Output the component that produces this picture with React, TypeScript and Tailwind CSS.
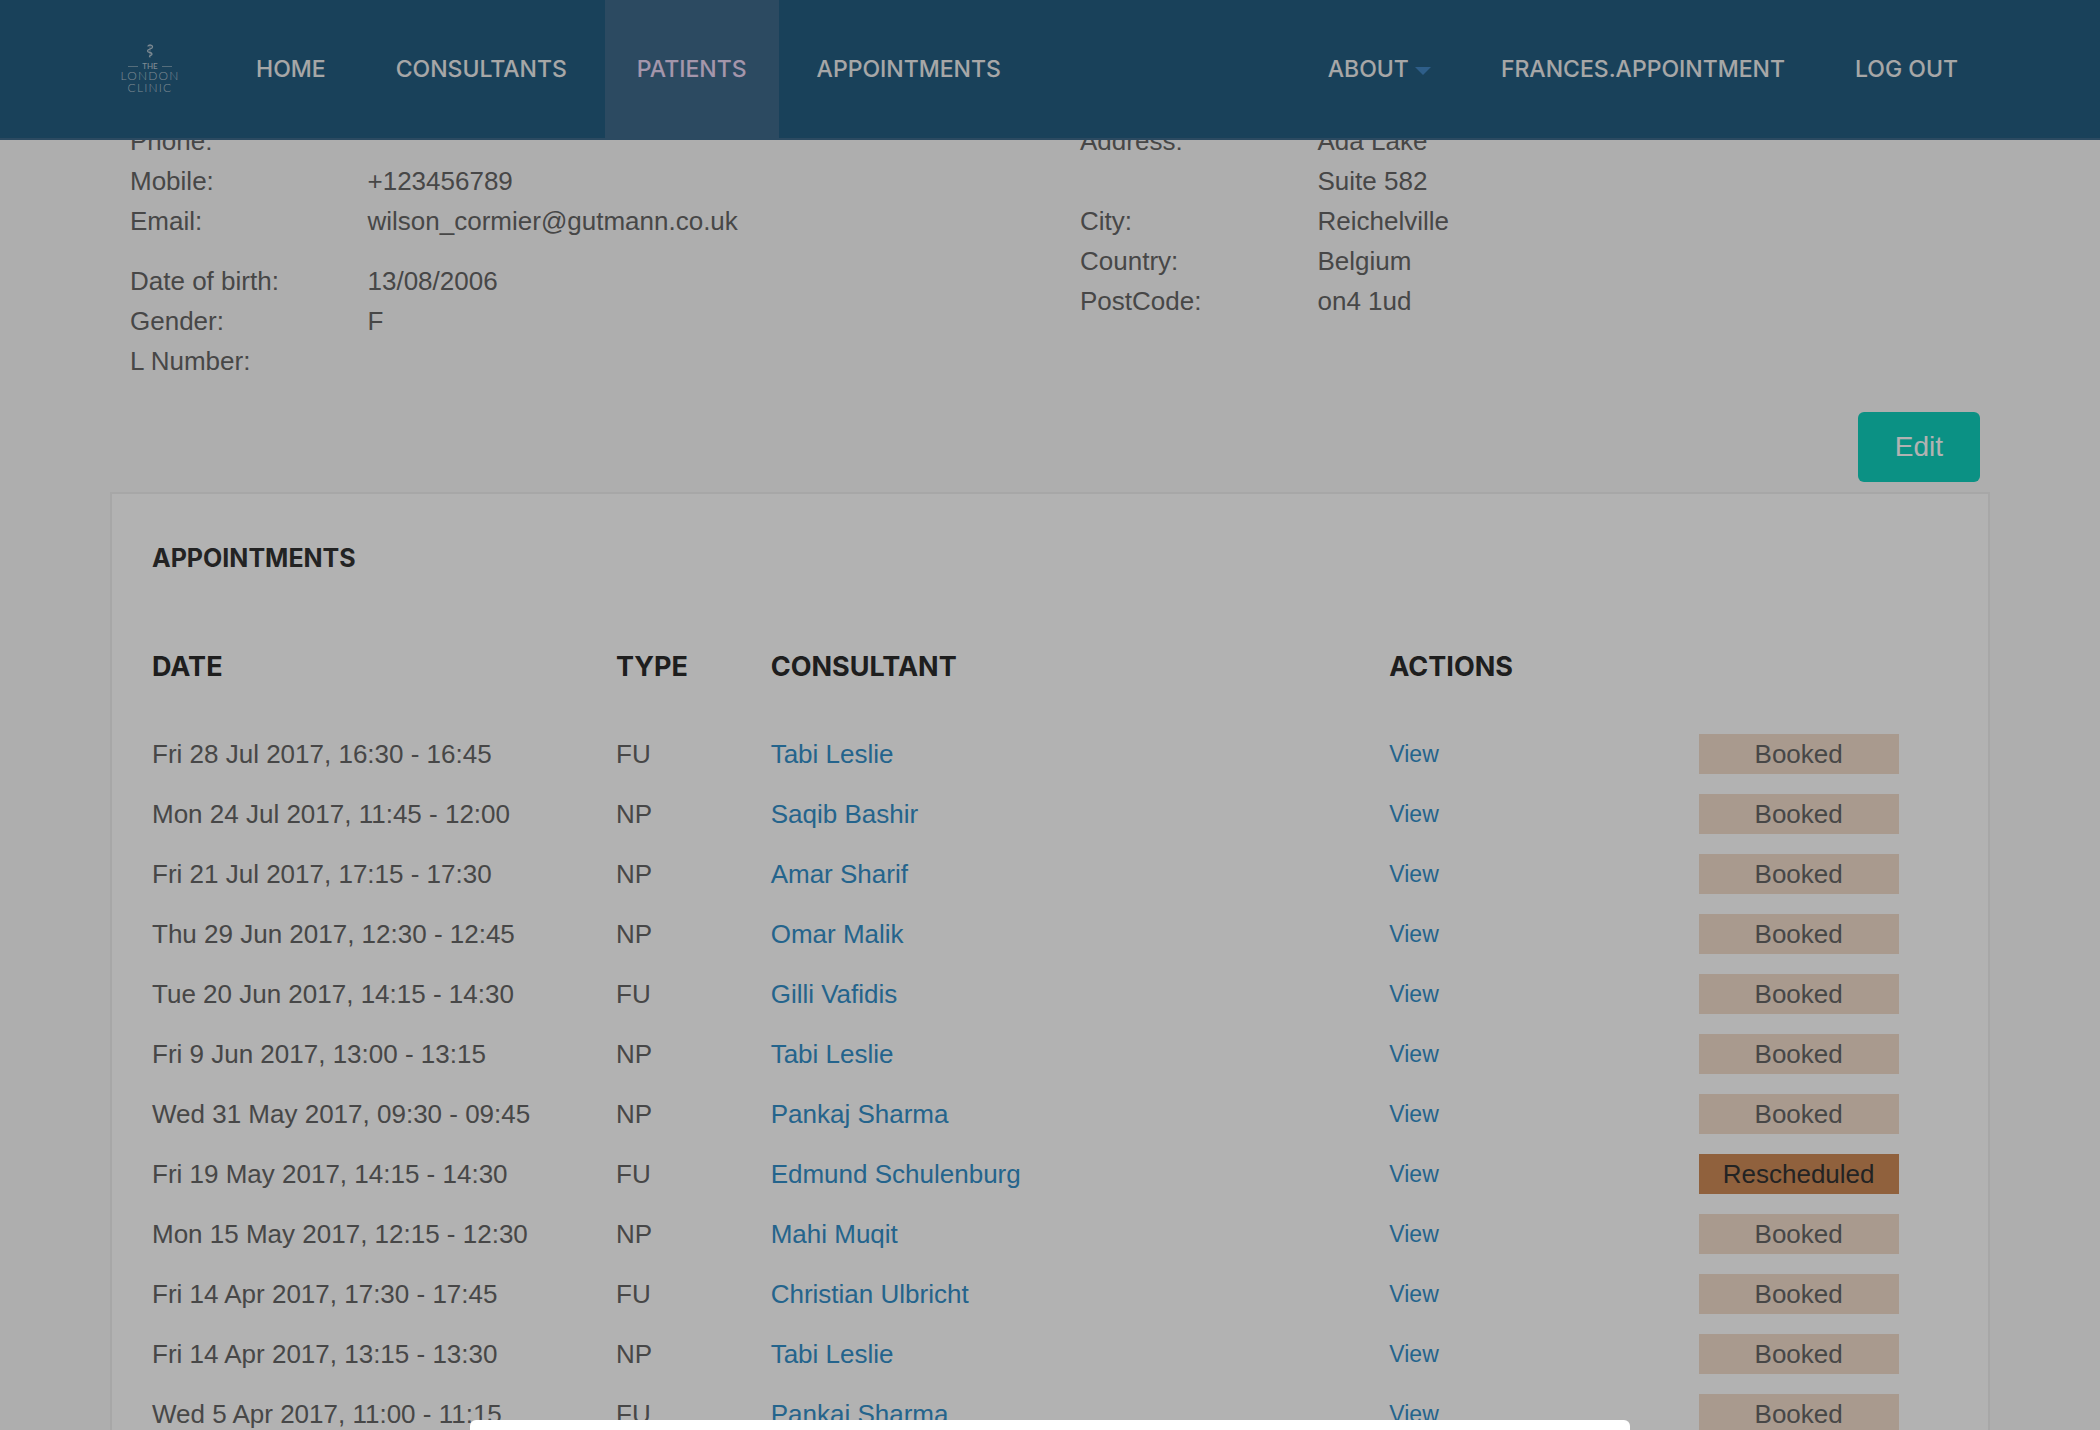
import type { ReactNode } from "react";

type Appointment = {
  date: string;
  type: "FU" | "NP";
  consultant: string;
  status: "Booked" | "Rescheduled";
};

const appointments: Appointment[] = [
  { date: "Fri 28 Jul 2017, 16:30 - 16:45", type: "FU", consultant: "Tabi Leslie", status: "Booked" },
  { date: "Mon 24 Jul 2017, 11:45 - 12:00", type: "NP", consultant: "Saqib Bashir", status: "Booked" },
  { date: "Fri 21 Jul 2017, 17:15 - 17:30", type: "NP", consultant: "Amar Sharif", status: "Booked" },
  { date: "Thu 29 Jun 2017, 12:30 - 12:45", type: "NP", consultant: "Omar Malik", status: "Booked" },
  { date: "Tue 20 Jun 2017, 14:15 - 14:30", type: "FU", consultant: "Gilli Vafidis", status: "Booked" },
  { date: "Fri 9 Jun 2017, 13:00 - 13:15", type: "NP", consultant: "Tabi Leslie", status: "Booked" },
  { date: "Wed 31 May 2017, 09:30 - 09:45", type: "NP", consultant: "Pankaj Sharma", status: "Booked" },
  { date: "Fri 19 May 2017, 14:15 - 14:30", type: "FU", consultant: "Edmund Schulenburg", status: "Rescheduled" },
  { date: "Mon 15 May 2017, 12:15 - 12:30", type: "NP", consultant: "Mahi Muqit", status: "Booked" },
  { date: "Fri 14 Apr 2017, 17:30 - 17:45", type: "FU", consultant: "Christian Ulbricht", status: "Booked" },
  { date: "Fri 14 Apr 2017, 13:15 - 13:30", type: "NP", consultant: "Tabi Leslie", status: "Booked" },
  { date: "Wed 5 Apr 2017, 11:00 - 11:15", type: "FU", consultant: "Pankaj Sharma", status: "Booked" },
];

function Logo() {
  return (
    <a href="#home" className="flex w-20 flex-col items-center font-['Lato',sans-serif] text-[#b4c6d2]">
      <svg viewBox="0 0 16 28" className="h-3.5 w-2" fill="none" stroke="currentColor" strokeWidth="2.6" aria-hidden="true">
        <path d="M4 5C4 1 13 1 13 6C13 11 3 9 3 14C3 18 12 16 12 20C12 24 6 22 7 26" />
        <path d="M8 0V28" strokeWidth="1" />
      </svg>
      <span className="mt-1 flex items-center gap-1 text-[8px] leading-2">
        <span className="h-px w-2.5 bg-current opacity-60" />
        THE
        <span className="h-px w-2.5 bg-current opacity-60" />
      </span>
      <span className="text-[12px] leading-3 font-light tracking-widest">LONDON</span>
      <span className="text-[12px] leading-3 font-light tracking-widest">CLINIC</span>
    </a>
  );
}

function NavLink({ active, children }: { active?: boolean; children: ReactNode }) {
  return (
    <a
      href="#nav"
      aria-current={active ? "page" : undefined}
      className={`flex h-full items-center gap-1.5 px-8 ${active ? "bg-[#406a8c] text-[#ebd7f5]" : "text-[#f0f0f0]"}`}
    >
      {children}
    </a>
  );
}

function Details({ rows, className }: { rows: [string, string[]][]; className?: string }) {
  return (
    <dl className={className}>
      {rows.map(([label, lines]) => (
        <div key={label} className="flex min-h-10">
          <dt className="w-1/4 shrink-0 px-5">{label}</dt>
          <dd className="px-5">
            {lines.map((line) => (
              <div key={line}>{line}</div>
            ))}
          </dd>
        </div>
      ))}
    </dl>
  );
}

export default function App() {
  return (
    <div className="h-screen overflow-hidden bg-[#fafafa] font-['Liberation_Sans',Arial,sans-serif] text-[26px] leading-10 text-[#666]">
      <header className="fixed inset-x-0 top-0 z-10 flex h-[140px] border-b-2 border-[#406a8c] bg-[#255d81] px-[110px] font-['Inter',sans-serif] text-[23px] font-medium">
        <div className="flex items-center pr-[34px]">
          <Logo />
        </div>
        <nav className="flex flex-1 items-center gap-1.5">
          <NavLink>HOME</NavLink>
          <NavLink>CONSULTANTS</NavLink>
          <NavLink active>PATIENTS</NavLink>
          <NavLink>APPOINTMENTS</NavLink>
          <div className="ml-auto flex h-full gap-1.5">
            <NavLink>
              ABOUT
              <svg viewBox="0 0 16 8" className="mt-1 h-2 w-4 fill-[#4287c5]" aria-hidden="true">
                <path d="M0 0H16L8 8Z" />
              </svg>
            </NavLink>
            <NavLink>FRANCES.APPOINTMENT</NavLink>
            <NavLink>LOG OUT</NavLink>
          </div>
        </nav>
      </header>

      <main className="px-[110px] pt-[121px]">
        <section className="-mr-5 grid grid-cols-2">
          <div>
            <Details
              rows={[
                ["Phone:", []],
                ["Mobile:", ["+123456789"]],
                ["Email:", ["wilson_cormier@gutmann.co.uk"]],
              ]}
            />
            <Details
              className="mt-5"
              rows={[
                ["Date of birth:", ["13/08/2006"]],
                ["Gender:", ["F"]],
                ["L Number:", []],
              ]}
            />
          </div>
          <Details
            rows={[
              ["Address:", ["Ada Lake", "Suite 582"]],
              ["City:", ["Reichelville"]],
              ["Country:", ["Belgium"]],
              ["PostCode:", ["on4 1ud"]],
            ]}
          />
        </section>

        <div className="mt-[31px] mb-2.5 flex justify-end pr-2.5">
          <button type="button" className="h-[70px] rounded-md bg-[#10d0bd] px-[37px] text-[28px] text-white">
            Edit
          </button>
        </div>

        <section className="border-2 border-[#efefef] bg-white pt-11 pl-5">
          <h2 className="px-5 font-['Inter',sans-serif] text-[25px] font-bold text-[#333]">APPOINTMENTS</h2>
          <table className="mt-[69px] w-full table-fixed text-left">
            <thead className="font-['Inter',sans-serif] text-[27px] text-[#2b2b2b]">
              <tr>
                <th className="w-3/12 px-5 pb-[37px]">DATE</th>
                <th className="w-1/12 px-5 pb-[37px]">TYPE</th>
                <th className="w-4/12 px-5 pb-[37px]">CONSULTANT</th>
                <th className="w-2/12 px-5 pb-[37px]">ACTIONS</th>
                <td className="w-2/12" />
              </tr>
            </thead>
            <tbody>
              {appointments.map((a) => (
                <tr key={a.date}>
                  <td className="px-5 py-2.5">{a.date}</td>
                  <td className="px-5 py-2.5">{a.type}</td>
                  <td className="px-5 py-2.5">
                    <a href="#consultant" className="block text-[#3490c9]">{a.consultant}</a>
                  </td>
                  <td className="px-5 py-2.5">
                    <a href="#view" className="block text-[23px] text-[#3490c9]">View</a>
                  </td>
                  <td className="px-5 py-2.5">
                    <div
                      className={`w-[200px] text-center ${
                        a.status === "Booked" ? "bg-[#f2ddcc]" : "bg-[#ce8b58] text-[#333]"
                      }`}
                    >
                      {a.status}
                    </div>
                  </td>
                </tr>
              ))}
            </tbody>
          </table>
        </section>
      </main>

      <div className="fixed inset-0 z-20 flex items-end justify-center bg-black/30">
        <div role="dialog" aria-label="Appointment" className="h-2.5 w-[1160px] rounded-t-md bg-white" />
      </div>
    </div>
  );
}
